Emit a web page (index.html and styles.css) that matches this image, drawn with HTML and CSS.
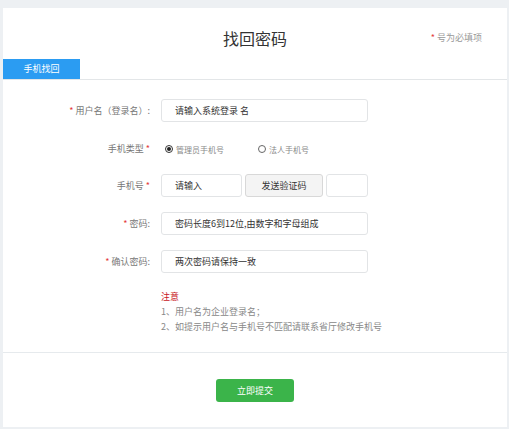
FILE: index.html
```html
<!DOCTYPE html>
<html lang="zh">
<head>
<meta charset="utf-8">
<title>找回密码</title>
<link rel="stylesheet" href="styles.css">
</head>
<body>
<div class="card">
  <div class="header">
    <div></div>
    <h1 class="title">找回密码</h1>
    <div class="required"><span class="star">*</span> 号为必填项</div>
  </div>
  <div class="tabs">
    <div class="tab">手机找回</div>
  </div>
  <div class="form">
    <div class="label"><span class="star">*</span> 用户名（登录名）:</div>
    <div class="field"><input class="input wide" value="请输入系统登录 名"></div>

    <div class="label radio-label">手机类型 <span class="star">*</span></div>
    <div class="field radios">
      <label class="radio"><span class="dot checked"></span>管理员手机号</label>
      <label class="radio"><span class="dot"></span>法人手机号</label>
    </div>

    <div class="label">手机号 <span class="star">*</span></div>
    <div class="field phone">
      <input class="input phone-input" value="请输入">
      <button class="send">发送验证码</button>
      <input class="input code-input" value="">
    </div>

    <div class="label"><span class="star">*</span> 密码:</div>
    <div class="field"><input class="input wide" value="密码长度6到12位,由数字和字母组成"></div>

    <div class="label"><span class="star">*</span> 确认密码:</div>
    <div class="field"><input class="input wide" value="两次密码请保持一致"></div>
  </div>
  <div class="notes">
    <div class="notes-title">注意</div>
    <div>1、用户名为企业登录名；</div>
    <div>2、如提示用户名与手机号不匹配请联系省厅修改手机号</div>
  </div>
  <div class="footer">
    <button class="submit">立即提交</button>
  </div>
</div>
</body>
</html>
```
FILE: styles.css
```css
* { box-sizing: border-box; }
html, body {
  margin: 0;
  padding: 0;
  background: #edf0f3;
  font-family: "Noto Sans CJK SC", "Noto Sans", sans-serif;
}
body { padding: 8px 2px 0 3px; }
.card {
  background: #fff;
  width: 504px;
  height: 419px;
}
.header {
  display: grid;
  grid-template-columns: 1fr auto 1fr;
  align-items: center;
  height: 51px;
  padding-top: 8px;
}
.title {
  margin: 0;
  font-size: 16px;
  font-weight: normal;
  color: #333;
  line-height: 20px;
}
.required {
  justify-self: end;
  padding-right: 25px;
  font-size: 9px;
  color: #999;
}
.star { color: #e4393c; }
.tabs {
  height: 21px;
  border-bottom: 1px solid #e3e6e8;
  display: flex;
}
.tab {
  width: 77px;
  height: 20px;
  background: #2b9cf2;
  color: #fff;
  font-size: 9px;
  line-height: 20px;
  text-align: center;
}
.form {
  display: grid;
  grid-template-columns: 158px 1fr;
  row-gap: 15px;
  padding-top: 19px;
}
.label {
  text-align: right;
  padding-right: 11px;
  font-size: 9px;
  color: #777;
  line-height: 23px;
  height: 23px;
}
.radio-label { height: 20px; line-height: 20px; padding-top: 0; margin-top: 2px; }
.field { display: flex; align-items: center; height: 23px; }
.radios { height: 20px; margin-top: 2px; padding-left: 4px; gap: 34px; }
.input {
  height: 23px;
  border: 1px solid #e2e4e6;
  border-radius: 3px;
  padding: 0 0 0 13px;
  font-family: inherit;
  font-size: 9px;
  color: #333;
  outline: none;
  background: #fff;
}
.wide { width: 207px; }
.phone { gap: 3px; }
.phone-input { width: 81px; }
.code-input { width: 42px; padding: 0; }
.send {
  width: 78px;
  height: 23px;
  border: 1px solid #d8d8d8;
  border-radius: 3px;
  background: #f4f4f4;
  font-family: inherit;
  font-size: 9px;
  color: #333;
  padding: 0;
}
.radio {
  display: flex;
  align-items: center;
  gap: 3px;
  font-size: 8px;
  color: #888;
}
.dot {
  width: 8px;
  height: 8px;
  border: 1px solid #666;
  border-radius: 50%;
  display: inline-block;
  position: relative;
}
.dot.checked { border-color: #333; }
.dot.checked::after {
  content: "";
  position: absolute;
  left: 1px;
  top: 1px;
  width: 4px;
  height: 4px;
  border-radius: 50%;
  background: #222;
}
.notes {
  margin-top: 16px;
  padding-left: 158px;
  font-size: 9px;
  line-height: 15px;
  color: #888;
}
.notes-title { color: #c8161d; }
.footer {
  margin-top: 18px;
  border-top: 1px solid #e6eaed;
  padding-top: 26px;
  display: flex;
  justify-content: center;
}
.submit {
  width: 78px;
  height: 23px;
  border: none;
  border-radius: 3px;
  background: #3bb44a;
  color: #fff;
  font-family: inherit;
  font-size: 9px;
  padding: 0;
}
```
